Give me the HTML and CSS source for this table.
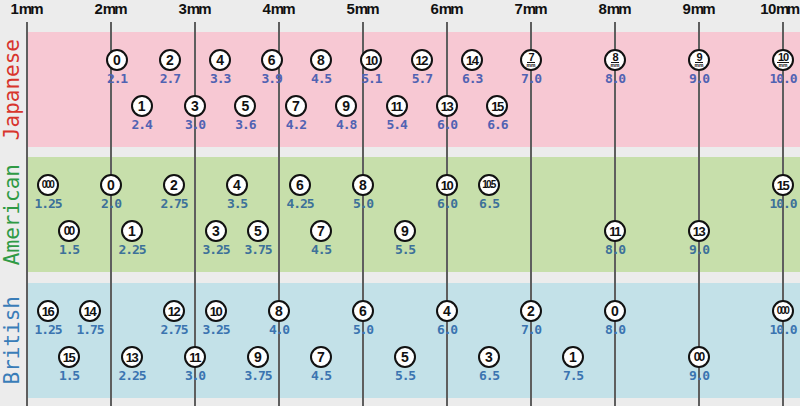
FILE: index.html
```html
<!DOCTYPE html>
<html>
<head>
<meta charset="utf-8">
<link rel="stylesheet" href="styles.css">
</head>
<body>
<div class="chart">
  <div class="scale">
    <span class="tick">1<span class="u">mm</span></span>
    <span class="tick">2<span class="u">mm</span></span>
    <span class="tick">3<span class="u">mm</span></span>
    <span class="tick">4<span class="u">mm</span></span>
    <span class="tick">5<span class="u">mm</span></span>
    <span class="tick">6<span class="u">mm</span></span>
    <span class="tick">7<span class="u">mm</span></span>
    <span class="tick">8<span class="u">mm</span></span>
    <span class="tick">9<span class="u">mm</span></span>
    <span class="tick last">10<span class="u">mm</span></span>
  </div>
  <div class="grid"></div>

  <section class="band jp">
    <div class="band-label"><span>Japanese</span></div>
    <div class="band-body">
      <div class="m r1" style="left:90px"><span class="c">0</span><span class="v">2.1</span></div>
      <div class="m r1" style="left:142.8px"><span class="c">2</span><span class="v">2.7</span></div>
      <div class="m r1" style="left:193.2px"><span class="c">4</span><span class="v">3.3</span></div>
      <div class="m r1" style="left:244.6px"><span class="c">6</span><span class="v">3.9</span></div>
      <div class="m r1" style="left:294px"><span class="c">8</span><span class="v">4.5</span></div>
      <div class="m r1" style="left:344.4px"><span class="c two">10</span><span class="v">5.1</span></div>
      <div class="m r1" style="left:394.8px"><span class="c two">12</span><span class="v">5.7</span></div>
      <div class="m r1" style="left:445.2px"><span class="c two">14</span><span class="v">6.3</span></div>
      <div class="m r1" style="left:504px"><span class="c mmc"><b>7</b><i>mm</i></span><span class="v">7.0</span></div>
      <div class="m r1" style="left:588px"><span class="c mmc"><b>8</b><i>mm</i></span><span class="v">8.0</span></div>
      <div class="m r1" style="left:672px"><span class="c mmc"><b>9</b><i>mm</i></span><span class="v">9.0</span></div>
      <div class="m r1" style="left:756px"><span class="c mmc"><b>10</b><i>mm</i></span><span class="v">10.0</span></div>

      <div class="m r2" style="left:114.6px"><span class="c">1</span><span class="v">2.4</span></div>
      <div class="m r2" style="left:168px"><span class="c">3</span><span class="v">3.0</span></div>
      <div class="m r2" style="left:218.4px"><span class="c">5</span><span class="v">3.6</span></div>
      <div class="m r2" style="left:268.8px"><span class="c">7</span><span class="v">4.2</span></div>
      <div class="m r2" style="left:319.2px"><span class="c">9</span><span class="v">4.8</span></div>
      <div class="m r2" style="left:369.6px"><span class="c two">11</span><span class="v">5.4</span></div>
      <div class="m r2" style="left:420px"><span class="c two">13</span><span class="v">6.0</span></div>
      <div class="m r2" style="left:470.4px"><span class="c two">15</span><span class="v">6.6</span></div>
    </div>
  </section>

  <section class="band us">
    <div class="band-label"><span>American</span></div>
    <div class="band-body">
      <div class="m r1" style="left:21px"><span class="c three">000</span><span class="v">1.25</span></div>
      <div class="m r1" style="left:84px"><span class="c">0</span><span class="v">2.0</span></div>
      <div class="m r1" style="left:147px"><span class="c">2</span><span class="v">2.75</span></div>
      <div class="m r1" style="left:210px"><span class="c">4</span><span class="v">3.5</span></div>
      <div class="m r1" style="left:273px"><span class="c">6</span><span class="v">4.25</span></div>
      <div class="m r1" style="left:336px"><span class="c">8</span><span class="v">5.0</span></div>
      <div class="m r1" style="left:420px"><span class="c two">10</span><span class="v">6.0</span></div>
      <div class="m r1" style="left:462px"><span class="c three">10.5</span><span class="v">6.5</span></div>
      <div class="m r1" style="left:756px"><span class="c two">15</span><span class="v">10.0</span></div>

      <div class="m r2" style="left:42px"><span class="c two zz">00</span><span class="v">1.5</span></div>
      <div class="m r2" style="left:105px"><span class="c">1</span><span class="v">2.25</span></div>
      <div class="m r2" style="left:189px"><span class="c">3</span><span class="v">3.25</span></div>
      <div class="m r2" style="left:231px"><span class="c">5</span><span class="v">3.75</span></div>
      <div class="m r2" style="left:294px"><span class="c">7</span><span class="v">4.5</span></div>
      <div class="m r2" style="left:378px"><span class="c">9</span><span class="v">5.5</span></div>
      <div class="m r2" style="left:588px"><span class="c two">11</span><span class="v">8.0</span></div>
      <div class="m r2" style="left:672px"><span class="c two">13</span><span class="v">9.0</span></div>
    </div>
  </section>

  <section class="band uk">
    <div class="band-label"><span>British</span></div>
    <div class="band-body">
      <div class="m r1" style="left:21px"><span class="c two">16</span><span class="v">1.25</span></div>
      <div class="m r1" style="left:63px"><span class="c two">14</span><span class="v">1.75</span></div>
      <div class="m r1" style="left:147px"><span class="c two">12</span><span class="v">2.75</span></div>
      <div class="m r1" style="left:189px"><span class="c two">10</span><span class="v">3.25</span></div>
      <div class="m r1" style="left:252px"><span class="c">8</span><span class="v">4.0</span></div>
      <div class="m r1" style="left:336px"><span class="c">6</span><span class="v">5.0</span></div>
      <div class="m r1" style="left:420px"><span class="c">4</span><span class="v">6.0</span></div>
      <div class="m r1" style="left:504px"><span class="c">2</span><span class="v">7.0</span></div>
      <div class="m r1" style="left:588px"><span class="c">0</span><span class="v">8.0</span></div>
      <div class="m r1" style="left:756px"><span class="c three">000</span><span class="v">10.0</span></div>

      <div class="m r2" style="left:42px"><span class="c two">15</span><span class="v">1.5</span></div>
      <div class="m r2" style="left:105px"><span class="c two">13</span><span class="v">2.25</span></div>
      <div class="m r2" style="left:168px"><span class="c two">11</span><span class="v">3.0</span></div>
      <div class="m r2" style="left:231px"><span class="c">9</span><span class="v">3.75</span></div>
      <div class="m r2" style="left:294px"><span class="c">7</span><span class="v">4.5</span></div>
      <div class="m r2" style="left:378px"><span class="c">5</span><span class="v">5.5</span></div>
      <div class="m r2" style="left:462px"><span class="c">3</span><span class="v">6.5</span></div>
      <div class="m r2" style="left:546px"><span class="c">1</span><span class="v">7.5</span></div>
      <div class="m r2" style="left:672px"><span class="c two zz">00</span><span class="v">9.0</span></div>
    </div>
  </section>
</div>
</body>
</html>
```

FILE: styles.css
```css
html, body {
  margin: 0;
  padding: 0;
  background: #ececec;
}

.chart {
  position: relative;
  width: 800px;
  height: 406px;
  overflow: hidden;
  background: #ececec;
  font-family: "Liberation Sans", Arial, sans-serif;
}

.scale {
  display: flex;
  height: 32px;
  margin-left: -15px;
}

.tick {
  flex: 0 0 84px;
  text-align: center;
  font-size: 15px;
  font-weight: bold;
  line-height: 17px;
  color: #111;
}

.tick .u {
  letter-spacing: -2px;
  margin-right: 2px;
}

.tick.last {
  letter-spacing: -0.5px;
  margin-left: -4px;
}

.tick.last .u {
  letter-spacing: -2.4px;
  margin-right: 0;
}

.grid {
  position: absolute;
  top: 22px;
  bottom: 0;
  left: 26px;
  right: 0;
  z-index: 1;
  background: repeating-linear-gradient(90deg, #5e5e5e 0 2px, transparent 2px 84px);
}

.band {
  display: flex;
  height: 115px;
}

.band.us {
  margin-top: 10px;
}

.band.uk {
  margin-top: 11px;
}

.band-label {
  flex: 0 0 27px;
  display: flex;
  align-items: center;
  justify-content: center;
  padding-right: 3px;
  box-sizing: border-box;
}

.band-label span {
  writing-mode: vertical-rl;
  transform: rotate(180deg);
  font-family: "DejaVu Sans Mono", monospace;
  font-size: 21px;
  line-height: 21px;
}

.jp .band-label span { color: #d8352c; }
.us .band-label span { color: #2f9a45; }
.uk .band-label span { color: #3a7db8; }

.band-body {
  flex: 1;
  position: relative;
}

.jp .band-body { background: #f7c8d3; }
.us .band-body { background: #c7dfab; }
.uk .band-body { background: #c3e1e8; }

.m {
  position: absolute;
  z-index: 2;
  width: 44px;
  margin-left: -22px;
  display: flex;
  flex-direction: column;
  align-items: center;
}

.m.r1 { top: 17px; }
.m.r2 { top: 63px; }

.c {
  width: 22px;
  height: 22px;
  box-sizing: border-box;
  border: 2px solid #111;
  border-radius: 50%;
  background: #fff;
  display: flex;
  align-items: center;
  justify-content: center;
  font-family: "Liberation Sans", Arial, sans-serif;
  font-weight: bold;
  font-size: 14px;
  line-height: 1;
  color: #111;
}

.c.two {
  font-size: 13px;
  letter-spacing: -1.5px;
  padding-right: 1px;
}

.c.two.zz {
  font-size: 12px;
  letter-spacing: -2px;
}

.c.three {
  font-size: 10px;
  letter-spacing: -1.8px;
  padding-right: 1px;
}

.c.mmc {
  flex-direction: column;
}

.c.mmc b {
  font-size: 11px;
  line-height: 9px;
  padding: 0 1px;
  border-bottom: 1px solid #111;
  letter-spacing: -1px;
}

.c.mmc i {
  font-style: normal;
  font-size: 5px;
  line-height: 5px;
  font-weight: bold;
}

.v {
  font-family: "DejaVu Sans Mono", monospace;
  font-weight: bold;
  font-size: 13px;
  line-height: 15px;
  letter-spacing: -1.1px;
  white-space: nowrap;
}

.jp .v { color: #5062b2; }
.us .v { color: #3d7199; }
.uk .v { color: #3b74b0; }
```
